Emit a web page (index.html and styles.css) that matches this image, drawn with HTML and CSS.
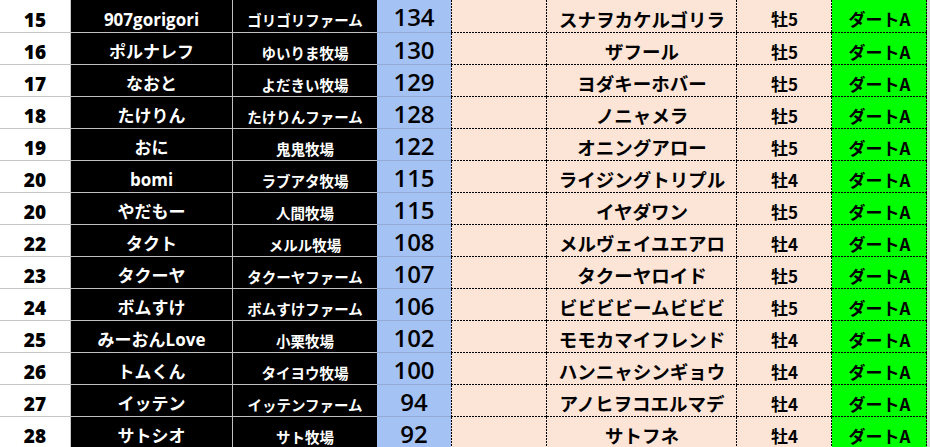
FILE: index.html
```html
<!DOCTYPE html>
<html lang="ja">
<head>
<meta charset="utf-8">
<title>Ranking</title>
<link rel="stylesheet" href="styles.css">
</head>
<body>
<div class="sheet">
  <div class="c rank">15</div><div class="c owner">907gorigori</div><div class="c farm">ゴリゴリファーム</div><div class="c score">134</div><div class="c blank"></div><div class="c horse">スナヲカケルゴリラ</div><div class="c sex">牡5</div><div class="c cls">ダートA</div>
  <div class="c rank">16</div><div class="c owner">ポルナレフ</div><div class="c farm">ゆいりま牧場</div><div class="c score">130</div><div class="c blank"></div><div class="c horse">ザフール</div><div class="c sex">牡5</div><div class="c cls">ダートA</div>
  <div class="c rank">17</div><div class="c owner">なおと</div><div class="c farm">よだきい牧場</div><div class="c score">129</div><div class="c blank"></div><div class="c horse">ヨダキーホバー</div><div class="c sex">牡5</div><div class="c cls">ダートA</div>
  <div class="c rank">18</div><div class="c owner">たけりん</div><div class="c farm">たけりんファーム</div><div class="c score">128</div><div class="c blank"></div><div class="c horse">ノニャメラ</div><div class="c sex">牡5</div><div class="c cls">ダートA</div>
  <div class="c rank">19</div><div class="c owner">おに</div><div class="c farm">鬼鬼牧場</div><div class="c score">122</div><div class="c blank"></div><div class="c horse">オニングアロー</div><div class="c sex">牡5</div><div class="c cls">ダートA</div>
  <div class="c rank">20</div><div class="c owner">bomi</div><div class="c farm">ラブアタ牧場</div><div class="c score">115</div><div class="c blank"></div><div class="c horse">ライジングトリプル</div><div class="c sex">牡4</div><div class="c cls">ダートA</div>
  <div class="c rank">20</div><div class="c owner">やだもー</div><div class="c farm">人間牧場</div><div class="c score">115</div><div class="c blank"></div><div class="c horse">イヤダワン</div><div class="c sex">牡5</div><div class="c cls">ダートA</div>
  <div class="c rank">22</div><div class="c owner">タクト</div><div class="c farm">メルル牧場</div><div class="c score">108</div><div class="c blank"></div><div class="c horse">メルヴェイユエアロ</div><div class="c sex">牡4</div><div class="c cls">ダートA</div>
  <div class="c rank">23</div><div class="c owner">タクーヤ</div><div class="c farm">タクーヤファーム</div><div class="c score">107</div><div class="c blank"></div><div class="c horse">タクーヤロイド</div><div class="c sex">牡5</div><div class="c cls">ダートA</div>
  <div class="c rank">24</div><div class="c owner">ボムすけ</div><div class="c farm">ボムすけファーム</div><div class="c score">106</div><div class="c blank"></div><div class="c horse">ビビビビームビビビ</div><div class="c sex">牡5</div><div class="c cls">ダートA</div>
  <div class="c rank">25</div><div class="c owner">みーおんLove</div><div class="c farm">小栗牧場</div><div class="c score">102</div><div class="c blank"></div><div class="c horse">モモカマイフレンド</div><div class="c sex">牡4</div><div class="c cls">ダートA</div>
  <div class="c rank">26</div><div class="c owner">トムくん</div><div class="c farm">タイヨウ牧場</div><div class="c score">100</div><div class="c blank"></div><div class="c horse">ハンニャシンギョウ</div><div class="c sex">牡4</div><div class="c cls">ダートA</div>
  <div class="c rank">27</div><div class="c owner">イッテン</div><div class="c farm">イッテンファーム</div><div class="c score">94</div><div class="c blank"></div><div class="c horse">アノヒヲコエルマデ</div><div class="c sex">牡4</div><div class="c cls">ダートA</div>
  <div class="c rank">28</div><div class="c owner">サトシオ</div><div class="c farm">サト牧場</div><div class="c score">92</div><div class="c blank"></div><div class="c horse">サトフネ</div><div class="c sex">牡4</div><div class="c cls">ダートA</div>
</div>
</body>
</html>
```

FILE: styles.css
```css
html, body {
  margin: 0;
  padding: 0;
  background: #d4d4d4;
  overflow: hidden;
}

.sheet {
  display: grid;
  grid-template-columns: 71px 162px 144px 74px 96px 190px 95px 95px;
  grid-template-rows: 33px repeat(13, 32px);
  width: 927px;
}

.c {
  box-sizing: border-box;
  display: flex;
  align-items: center;
  justify-content: center;
  line-height: 1;
  white-space: nowrap;
  overflow: hidden;
  font-family: "Noto Sans CJK JP", sans-serif;
  font-weight: 700;
}

.rank {
  background: #ffffff;
  color: #000000;
  border-right: 1px solid #c6c6c6;
  border-bottom: 1px solid #c6c6c6;
  font-family: "Open Sans", "Noto Sans CJK JP", sans-serif;
  font-weight: 800;
  font-size: 19px;
  padding-top: 8px;
}

.owner {
  background: #000000;
  color: #ffffff;
  border-right: 1px solid #c0c0c0;
  border-bottom: 1px solid #c0c0c0;
  font-family: "Open Sans", "Noto Sans CJK JP", sans-serif;
  font-size: 17px;
  padding-top: 6px;
}

.farm {
  background: #000000;
  color: #ffffff;
  border-bottom: 1px solid #c0c0c0;
  font-size: 14.5px;
  padding-top: 9px;
}

.score {
  background: #a4c2f4;
  color: #000000;
  border-bottom: 1px solid #93abd3;
  font-family: "Open Sans", sans-serif;
  font-weight: 600;
  font-size: 24px;
  padding-top: 2px;
}

.blank,
.horse,
.sex {
  background:
    repeating-linear-gradient(to right, #000 0 2px, transparent 2px 3px) left bottom / 100% 1px no-repeat,
    repeating-linear-gradient(to bottom, #000 0 2px, transparent 2px 3px) right top / 1px 100% no-repeat,
    #fce4d6;
}

.blank {
  background:
    repeating-linear-gradient(to right, #000 0 2px, transparent 2px 3px) left bottom / 100% 1px no-repeat,
    repeating-linear-gradient(to bottom, #000 0 2px, transparent 2px 3px) right top / 1px 100% no-repeat,
    repeating-linear-gradient(to bottom, #000 0 2px, transparent 2px 3px) left top / 1px 100% no-repeat,
    #fce4d6;
}

.horse {
  color: #000000;
  font-size: 18.5px;
  padding-top: 5px;
}

.sex {
  color: #000000;
  font-size: 17px;
  padding-top: 4px;
}

.cls {
  background:
    repeating-linear-gradient(to right, #000 0 2px, transparent 2px 3px) left bottom / 100% 1px no-repeat,
    repeating-linear-gradient(to bottom, #000 0 2px, transparent 2px 3px) right top / 1px 100% no-repeat,
    #00ff00;
  color: #000000;
  font-size: 17px;
  padding-top: 4px;
}
```
